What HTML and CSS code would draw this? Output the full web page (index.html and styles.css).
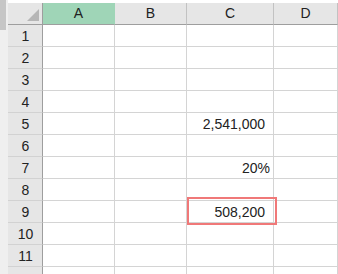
FILE: index.html
```html
<!DOCTYPE html>
<html lang="en">
<head>
  <meta charset="UTF-8">
  <title>Sheet</title>
  <link rel="stylesheet" href="styles.css">
</head>
<body>
  <div class="window">
    <div class="strip"><div class="thumb"></div></div>
    <div class="sheet">
      <div class="corner">
        <svg width="14" height="13" viewBox="0 0 14 13"><polygon points="13,0 13,12 1,12" fill="#b6b6b6"/></svg>
      </div>
      <div class="colhead active">A</div>
      <div class="colhead">B</div>
      <div class="colhead">C</div>
      <div class="colhead">D</div>

      <div class="rowhead">1</div><div class="cell"></div><div class="cell"></div><div class="cell"></div><div class="cell"></div>
      <div class="rowhead">2</div><div class="cell"></div><div class="cell"></div><div class="cell"></div><div class="cell"></div>
      <div class="rowhead">3</div><div class="cell"></div><div class="cell"></div><div class="cell"></div><div class="cell"></div>
      <div class="rowhead">4</div><div class="cell"></div><div class="cell"></div><div class="cell"></div><div class="cell"></div>
      <div class="rowhead">5</div><div class="cell"></div><div class="cell"></div><div class="cell num pad">2,541,000</div><div class="cell"></div>
      <div class="rowhead">6</div><div class="cell"></div><div class="cell"></div><div class="cell"></div><div class="cell"></div>
      <div class="rowhead">7</div><div class="cell"></div><div class="cell"></div><div class="cell num">20%</div><div class="cell"></div>
      <div class="rowhead">8</div><div class="cell"></div><div class="cell"></div><div class="cell"></div><div class="cell"></div>
      <div class="rowhead">9</div><div class="cell"></div><div class="cell"></div><div class="cell num pad marked">508,200<span class="mark"></span></div><div class="cell"></div>
      <div class="rowhead">10</div><div class="cell"></div><div class="cell"></div><div class="cell"></div><div class="cell"></div>
      <div class="rowhead">11</div><div class="cell"></div><div class="cell"></div><div class="cell"></div><div class="cell"></div>
      <div class="rowhead"></div><div class="cell"></div><div class="cell"></div><div class="cell"></div><div class="cell"></div>
    </div>
  </div>
</body>
</html>
```

FILE: styles.css
```css
html, body {
  margin: 0;
  background: #fff;
  overflow: hidden;
}
body {
  font-family: "Liberation Sans", Arial, sans-serif;
  font-size: 14px;
  color: #222;
}
.window {
  display: flex;
  height: 274px;
  overflow: hidden;
}
.strip {
  width: 8px;
  flex: none;
  background: #efefef;
}
.thumb {
  width: 6px;
  height: 30px;
  background: #c6c6c6;
}
.sheet {
  flex: 1;
  padding-top: 3px;
  display: grid;
  grid-template-columns: 35px 72px 72px 87px 1fr;
  grid-auto-rows: 22px;
  align-content: start;
}
.sheet > div {
  box-sizing: border-box;
}
.corner {
  background: #e6e6e6;
  border-right: 1px solid #9e9e9e;
  border-bottom: 1px solid #9e9e9e;
  display: flex;
  align-items: flex-end;
  justify-content: flex-end;
  padding: 0 2px 2px 0;
}
.corner svg {
  display: block;
}
.colhead {
  background: #e6e6e6;
  border-right: 1px solid #c2c2c2;
  border-bottom: 1px solid #9e9e9e;
  text-align: center;
  line-height: 21px;
}
.colhead.active {
  background: #9fd5b7;
  border-right-color: #9fd5b7;
}
.rowhead {
  background: #e6e6e6;
  border-right: 1px solid #9e9e9e;
  border-bottom: 1px solid #d2d2d2;
  text-align: center;
  line-height: 23px;
  padding-left: 1px;
}
.cell {
  border-right: 1px solid #d4d4d4;
  border-bottom: 1px solid #d4d4d4;
}
.num {
  text-align: right;
  padding-right: 3px;
  line-height: 23px;
}
.num.pad {
  padding-right: 8px;
}
.marked {
  position: relative;
}
.mark {
  position: absolute;
  left: 0;
  top: -4px;
  right: -4px;
  bottom: -3px;
  border: 2px solid #f07878;
}
```
